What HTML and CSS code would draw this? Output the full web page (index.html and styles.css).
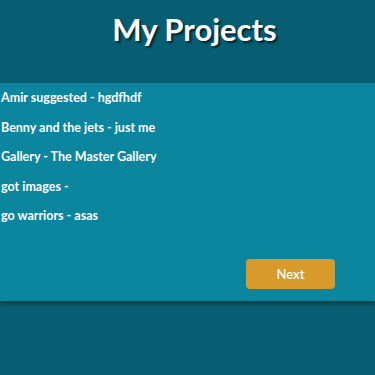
FILE: index.html
```html
<!DOCTYPE html>
<html lang="en">
<head>
    <meta charset="UTF-8">
    <meta name="viewport" content="width=device-width, initial-scale=1.0">
    <title>My Projects</title>
    <link rel="stylesheet" href="styles.css">
</head>
<body>
    <div class="header">
        <h1>My Projects</h1>
    </div>

    <div class="projects-panel">
        <ul class="project-list">
            <li>Amir suggested - hgdfhdf</li>
            <li>Benny and the jets - just me</li>
            <li>Gallery - The Master Gallery</li>
            <li>got images -</li>
            <li>go warriors - asas</li>
        </ul>
        <div class="button-row">
            <button class="next-button">Next</button>
        </div>
    </div>
</body>
</html>
```

FILE: styles.css
```css
body {
    background-color: rgb(7 94 114);
    color: white;
    font-family: Lato, "Open Sans", sans-serif;
    margin: 0;
    min-height: 100vh;
}

.header {
    height: 83px;
    display: flex;
    justify-content: center;
    padding-top: 9px;
    padding-left: 14px;
    box-sizing: border-box;
}

.header h1 {
    margin: 0;
    font-size: 31px;
    font-weight: 700;
    line-height: 40px;
    text-shadow: 2px 2px 2px rgba(0,0,0,0.6);
}

.projects-panel {
    background-color: rgb(12 133 158);
    padding-bottom: 12px;
    box-shadow: 0 3px 4px rgba(0,0,0,0.35);
}

.project-list {
    list-style: none;
    margin: 0;
    padding: 0 0 0 1px;
}

.project-list li {
    height: 29.5px;
    line-height: 29.5px;
    font-size: 12.5px;
    font-weight: 700;
}

.button-row {
    display: flex;
    justify-content: flex-end;
    padding-right: 40px;
    margin-top: 28.5px;
}

.next-button {
    width: 89px;
    height: 30px;
    border: none;
    border-radius: 4px;
    background-color: rgb(217 154 44);
    color: white;
    font-family: Lato, "Open Sans", sans-serif;
    font-size: 13px;
    font-weight: 600;
    cursor: pointer;
}
```
